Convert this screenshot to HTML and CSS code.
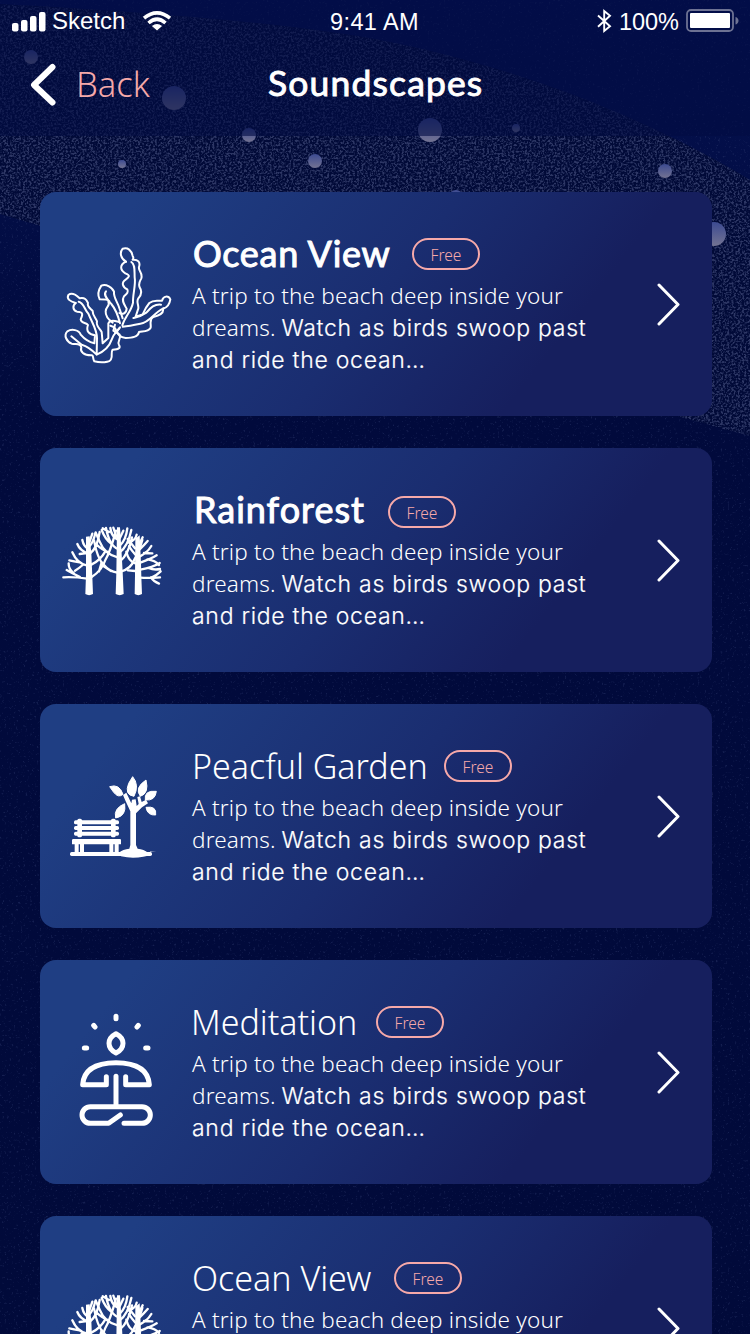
FILE: index.html
```html
<!DOCTYPE html>
<html lang="en">
<head>
<meta charset="utf-8">
<title>Soundscapes</title>
<link rel="stylesheet" href="styles.css">
</head>
<body>
<div class="screen">
  <svg class="sky" viewBox="0 0 750 1334" aria-hidden="true">
    <defs>
      <linearGradient id="night" x1="0" y1="0" x2="0" y2="1">
        <stop offset="0" stop-color="#041150"/><stop offset=".3" stop-color="#010a3c"/><stop offset="1" stop-color="#010a3a"/>
      </linearGradient>
      <linearGradient id="star" x1="0" y1="0" x2="0" y2="1">
        <stop offset="0" stop-color="#3c4a91"/><stop offset="1" stop-color="#737392"/>
      </linearGradient>
      <filter id="grain" x="0" y="0" width="100%" height="100%" color-interpolation-filters="sRGB">
        <feTurbulence type="fractalNoise" baseFrequency=".47" numOctaves="3" seed="4"/>
        <feColorMatrix values="0 0 0 0 .21  0 0 0 0 .25  0 0 0 0 .43  4 0 0 0 -1.75"/>
        <feComposite in2="SourceGraphic" operator="in"/>
      </filter>
      <filter id="dust" x="0" y="0" width="100%" height="100%" color-interpolation-filters="sRGB">
        <feTurbulence type="fractalNoise" baseFrequency=".43" numOctaves="2" seed="9"/>
        <feColorMatrix values="0 0 0 0 .2  0 0 0 0 .25  0 0 0 0 .45  5 0 0 0 -3.1"/>
      </filter>
    </defs>
    <rect width="750" height="1334" fill="url(#night)"/>
    <rect width="750" height="1334" filter="url(#dust)" opacity=".4"/>
    <path d="M0 4C150 12 300 24 390 42C530 70 660 125 750 180V436C560 385 260 290 0 214Z" fill="#010a38"/>
    <path d="M0 4C150 12 300 24 390 42C530 70 660 125 750 180V436C560 385 260 290 0 214Z" filter="url(#grain)" opacity=".85"/>
    <g fill="url(#star)">
      <circle cx="31" cy="57" r="7"/><circle cx="174" cy="98" r="12"/><circle cx="249" cy="135" r="7"/>
      <circle cx="122" cy="164" r="4"/><circle cx="315" cy="161" r="7"/><circle cx="430" cy="130" r="12"/>
      <circle cx="516" cy="128" r="4"/><circle cx="665" cy="171" r="7"/><circle cx="456" cy="197" r="7"/>
      <circle cx="714" cy="234" r="12"/>
    </g>
    <rect width="750" height="136" fill="#010b42" opacity=".6"/>
  </svg>

  <div class="status">
    <div class="status-left">
      <svg width="34" height="21" viewBox="0 0 34 21" fill="#fff"><rect y="12" width="6.500" height="8.500" rx="2"/><rect x="9" y="9" width="6.500" height="11.500" rx="2"/><rect x="18" y="5" width="6.500" height="15.500" rx="2"/><rect x="27" y="1" width="6.500" height="19.500" rx="2"/></svg>
      <span class="carrier">Sketch</span>
      <svg class="wifi" width="30" height="22" viewBox="0 0 30 22"><g fill="none" stroke="#fff" stroke-width="3.600"><path d="M2 8.200Q15-2.600 28 8.200"/><path d="M6.500 13Q15 5.500 23.500 13"/></g><path d="M15 20.500L9.900 15.900Q15 12 20.100 15.900Z" fill="#fff"/></svg>
    </div>
    <span class="clock">9:41 AM</span>
    <div class="status-right">
      <svg width="15" height="24" viewBox="0 0 15 24" fill="none" stroke="#fff" stroke-width="1.900"><path d="M1 6.500L13 17.300L7.200 22V2L13 6.700L1 17.800"/></svg>
      <span class="charge">100%</span>
      <svg width="53" height="24" viewBox="0 0 53 24"><rect x="1" y="1" width="46" height="21" rx="4" fill="none" stroke="#6d7293" stroke-width="1.800"/><rect x="4" y="4" width="40" height="15" rx="1" fill="#fff"/><path d="M49.500 8C53.500 9 53.500 14.500 49.500 15.500Z" fill="#6d7293"/></svg>
    </div>
  </div>

  <div class="nav">
    <svg width="26" height="44" viewBox="0 0 26 44" fill="none" stroke="#fff" stroke-width="6" stroke-linecap="round" stroke-linejoin="round"><path d="M21.500 4L3 22L21.500 39.500"/></svg>
    <span class="back">Back</span>
    <h1 class="heading">Soundscapes</h1>
  </div>

  <div class="list">
    <div class="card">
      <svg class="icon" viewBox="0 0 456 672"><g transform="translate(0 114)" fill="none" stroke="#fff" stroke-width="6" stroke-linejoin="round" stroke-linecap="round">
        <path d="M258 95C242 86 238 68 248 56C264 52 274 60 278 78Q282 84 278 89C294 88 302 97 297 111C294 123 309 128 304 145C299 155 294 160 299 172C307 184 303 196 295 205C288 216 296 222 295 235L287 260L308 253Q317 232 328 219C341 208 353 214 366 212C370 197 385 196 391 208C389 222 383 232 369 236C372 249 357 257 340 261C326 269 334 282 332 293C324 307 306 303 297 306C294 322 275 323 257 324C242 324 230 312 232 302L240 292"/>
        <path d="M258 95C239 104 239 119 256 130C271 136 269 139 258 148C242 158 248 171 262 178C266 187 261 191 252 199C243 213 254 225 260 236C259 252 246 254 238 249"/>
        <path d="M274 96C286 103 283 122 284 142C288 164 278 192 279 218C273 246 255 259 247 286M363 224C341 222 331 235 319 248C302 260 290 262 280 264M370 235C341 248 330 278 301 281Q267 288 248 290"/>
        <path d="M208 213C205 209 189 208 179 208C171 193 174 182 184 167C198 160 218 173 222 185C220 204 233 215 239 237L248 265M198 184C188 195 204 209 214 222C229 240 235 260 240 280M205 215C212 228 197 229 197 244C196 259 207 270 218 278"/>
        <path d="M107 219C90 214 79 207 85 195C99 184 112 199 119 205C135 202 139 209 144 219C140 229 150 235 158 243C157 256 168 264 171 274C167 287 178 294 185 306L188 340L205 324V280C212 266 228 274 237 276"/>
        <path d="M107 219C96 228 99 241 111 245C130 245 129 254 122 268C124 281 138 277 144 285C137 304 147 312 165 316L163 340C145 336 134 328 122 314C117 299 95 296 82 304C70 316 80 335 95 341C110 344 122 339 124 352C119 365 132 376 153 376C162 374 157 386 163 394C181 399 210 398 213 388C219 377 211 368 218 359C238 359 242 353 237 345C230 333 245 327 239 314L220 302L225 284"/>
        <path d="M116 215C132 218 132 238 145 251C157 280 171 298 171 325L170 374Q147 350 125 344L94 319M170 374Q205 359 215 329C221 311 230 305 238 295M211 287C225 290 232 300 225 309"/>
      </g></svg>
      <div class="info">
        <div class="row"><h2 class="title strong w-ocean">Ocean View</h2><span class="badge">Free</span></div>
        <p class="desc"><span class="l1">A trip to the beach deep inside your</span><br><span class="l2">dreams.</span> <span class="l3">Watch as birds swoop past</span><br><span class="l4">and ride the ocean…</span></p>
      </div>
      <svg class="go" viewBox="0 0 24 44"><path d="M2 3L21 22.500L2 42"/></svg>
    </div>

    <div class="card">
      <svg class="icon" viewBox="0 0 456 672"><g id="trees" transform="translate(0 156)">
        <g fill="#fff">
          <path d="M138 110L149 109L154 160L157 230L159 282Q147 289 136 282L138 224Z"/>
          <path d="M231 82H240L244 145L248 215L251 282Q239 289 227 282L229 218Z"/>
          <path d="M286 116L299 106L303 190L304 230L306 282Q295 289 284 282L285 225Z"/>
        </g>
        <g fill="none" stroke="#fff" stroke-width="7" stroke-linecap="round">
          <path d="M142 236Q102 230 70 232M120 231Q97 220 80 210M102 220Q85 207 86 190M142 197Q112 192 97 157M119 187Q101 184 88 181M128 195Q117 205 105 212M144 161Q119 151 112 132M140 159L119 162M144 145Q131 140 127 120M147 130L157 101"/>
          <path d="M154 232Q186 211 196 180Q210 157 228 92M154 194Q181 181 196 154M150 161Q172 144 179 96M148 139Q158 132 167 97M177 214L185 187"/>
          <path d="M232 218Q207 214 192 195Q172 177 162 121M213 213L190 198M233 172Q194 163 179 125L168 100M206 157Q188 151 166 131M234 147Q208 137 198 84M215 132Q196 119 185 90M234 119Q214 110 211 84M229 109L220 83M188 85L207 96"/>
          <path d="M242 215Q274 206 284 177Q298 153 307 120M240 184Q265 165 276 112M239 157Q264 139 274 90M240 136Q258 119 262 85M240 113L250 92M266 128Q287 121 290 104"/>
          <path d="M301 233Q328 235 360 232M333 232Q341 245 357 251M336 232Q352 224 362 214M301 209Q339 202 359 189M325 204Q343 211 360 207M301 188Q334 176 350 166M322 178Q346 181 357 195M300 169Q322 158 334 138M312 159L337 160M299 148Q312 136 323 123M298 132L308 112M286 213L264 211M286 190Q266 184 259 155M287 165Q274 150 267 139M285 145L263 117"/>
        </g>
      </g></svg>
      <div class="info">
        <div class="row low"><h2 class="title strong w-rain">Rainforest</h2><span class="badge">Free</span></div>
        <p class="desc"><span class="l1">A trip to the beach deep inside your</span><br><span class="l2">dreams.</span> <span class="l3">Watch as birds swoop past</span><br><span class="l4">and ride the ocean…</span></p>
      </div>
      <svg class="go" viewBox="0 0 24 44"><path d="M2 3L21 22.500L2 42"/></svg>
    </div>

    <div class="card">
      <svg class="icon" viewBox="0 0 456 672"><g transform="translate(30 168)" fill="#fff">
        <rect x="72" y="181" width="135" height="12" rx="5"/><rect x="72" y="198" width="135" height="12" rx="5"/><rect x="72" y="215" width="135" height="12" rx="5"/>
        <rect x="82" y="176" width="14" height="56" rx="5"/><rect x="183" y="176" width="14" height="56" rx="5"/>
        <path d="M70 237H210Q213 237 213 241V253H206V278H194V253H190V278H178V253H102V278H90V253H86V278H74V253H66V241Q66 237 70 237Z"/>
        <rect x="60" y="276" width="246" height="12" rx="5"/>
        <path d="M206 279Q219 267 238 266L241 255V154L227 124L219 105L229 98L244 130L246 119L257 118L260 138L266 132L262 111L270 109L275 126L288 119L294 130L276 142L258 160V255L263 266Q282 268 294 278Q306 286 280 290Q247 297 213 289Z"/>
        <path d="M248 50Q269 75 252 109Q222 105 236 70ZM179 80Q208 70 219 103Q205 115 191 97ZM288 60Q298 100 271 109Q252 84 288 60ZM319 94Q316 123 286 120Q281 90 319 94ZM288 142Q321 137 317 165Q292 167 288 142ZM224 131Q230 168 197 174Q190 145 224 131Z" stroke="#fff" stroke-width="3" stroke-linejoin="round"/>
        <path d="M300 273L319 274L300 276Z" opacity=".5"/>
      </g></svg>
      <div class="info">
        <div class="row"><h2 class="title w-garden">Peacful Garden</h2><span class="badge">Free</span></div>
        <p class="desc"><span class="l1">A trip to the beach deep inside your</span><br><span class="l2">dreams.</span> <span class="l3">Watch as birds swoop past</span><br><span class="l4">and ride the ocean…</span></p>
      </div>
      <svg class="go" viewBox="0 0 24 44"><path d="M2 3L21 22.500L2 42"/></svg>
    </div>

    <div class="card">
      <svg class="icon" viewBox="0 0 456 672"><g transform="translate(60 120)" fill="none" stroke="#fff" stroke-width="15" stroke-linecap="round" stroke-linejoin="round">
        <path d="M168 101Q147 112 147 130Q147 149 168 159Q189 149 189 130Q189 112 168 101Z"/>
        <path d="M168 49V56M101 76L105 81M235 76L231 81M73 144H80M257 144H264"/>
        <path d="M139 230V254H68Q72 189 168 188Q264 189 268 254H197V230M168 229V316M181 345L146 370H91A25 25 0 0 1 91 320H246A25 25 0 0 1 246 370H192"/>
      </g></svg>
      <div class="info">
        <div class="row"><h2 class="title w-med">Meditation</h2><span class="badge">Free</span></div>
        <p class="desc"><span class="l1">A trip to the beach deep inside your</span><br><span class="l2">dreams.</span> <span class="l3">Watch as birds swoop past</span><br><span class="l4">and ride the ocean…</span></p>
      </div>
      <svg class="go" viewBox="0 0 24 44"><path d="M2 3L21 22.500L2 42"/></svg>
    </div>

    <div class="card">
      <svg class="icon" viewBox="0 0 456 672"><use href="#trees"/></svg>
      <div class="info">
        <div class="row"><h2 class="title w-view">Ocean View</h2><span class="badge">Free</span></div>
        <p class="desc"><span class="l1">A trip to the beach deep inside your</span></p>
      </div>
      <svg class="go" viewBox="0 0 24 44"><path d="M2 3L21 22.500L2 42"/></svg>
    </div>
  </div>
</div>
</body>
</html>
```

FILE: styles.css
```css
* { box-sizing: border-box; }
body { margin: 0; background: #010a3a; color: #fff; font-family: "Noto Sans", "Open Sans", sans-serif; }
svg { display: block; flex: none; }
h1, h2, p { margin: 0; font-weight: 400; white-space: nowrap; }

.screen { position: relative; width: 750px; height: 1334px; overflow: hidden; }
.sky { position: absolute; inset: 0; width: 750px; height: 1334px; }

.status {
  position: relative; height: 42px; padding: 0 11px 0 12px;
  display: grid; grid-template-columns: 1fr auto 1fr; align-items: center;
  font: 24px/28px "Liberation Sans", Arial, sans-serif;
}
.status-left, .status-right { display: flex; align-items: center; }
.status-right { justify-content: flex-end; gap: 7px; }
.carrier { margin-left: 6px; }
.wifi { margin-left: 17px; }
.clock { padding: 2px 2px 0 0; letter-spacing: .4px; font-size: 23.500px; }
.charge { padding-top: 1px; font-size: 23.500px; }

.nav { position: relative; height: 86px; display: grid; grid-template-columns: 26px 191px auto; align-items: center; padding-left: 31px; }
.back { padding-left: 19px; color: #f6a9a9; font: 300 34.500px/44px "Noto Sans", sans-serif; margin-top: -2px; }
.heading { padding-left: 20px; margin-top: -5px; font: 400 35.500px/44px Lato, sans-serif; letter-spacing: 1.150px; -webkit-text-stroke: .9px; }

.list { position: relative; padding: 64px 38px 0 40px; display: flex; flex-direction: column; gap: 32px; }
.card {
  height: 224px; flex: none; border-radius: 16px; overflow: hidden;
  display: grid; grid-template-columns: 152px 1fr 24px; align-items: start; padding-right: 31px;
  background: linear-gradient(128deg, #1f3e83 12%, #1a2d70 50%, #161f5e 75%);
}
.icon { width: 152px; height: 224px; }
.info { padding-top: 42px; }
.row { display: flex; height: 46px; align-items: flex-start; }
.title { font: 300 34px/40px "Noto Sans", sans-serif; }
.strong { margin-top: -1px; font: 400 36px/40px Lato, sans-serif; -webkit-text-stroke: 1px; }
.badge {
  width: 68px; height: 32px; margin-top: 4px; border: 2px solid #f6a9a9; border-radius: 16px;
  color: #f6a9a9; font: 300 15.500px/30px "Noto Sans", sans-serif; text-align: center;
}
.low .badge { margin-top: 6px; }
.w-ocean { width: 220px; padding-left: 1px; letter-spacing: .700px; }
.w-rain { width: 196px; padding-left: 2px; letter-spacing: 1px; }
.w-garden { width: 252px; }
.w-med { width: 184px; margin-left: -1px; margin-right: 1px; }
.w-view { width: 202px; }
.desc { font: 300 22.500px/32px "Noto Sans", sans-serif; }
.l1 { letter-spacing: .180px; }
.l2 { letter-spacing: .150px; }
.l3, .l4 { font: 300 23px/32px Inter, sans-serif; letter-spacing: .730px; -webkit-text-stroke: .2px; }
.go { width: 24px; height: 44px; margin-top: 90px; fill: none; stroke: #fff; stroke-width: 3; stroke-linecap: round; stroke-linejoin: round; }
```
